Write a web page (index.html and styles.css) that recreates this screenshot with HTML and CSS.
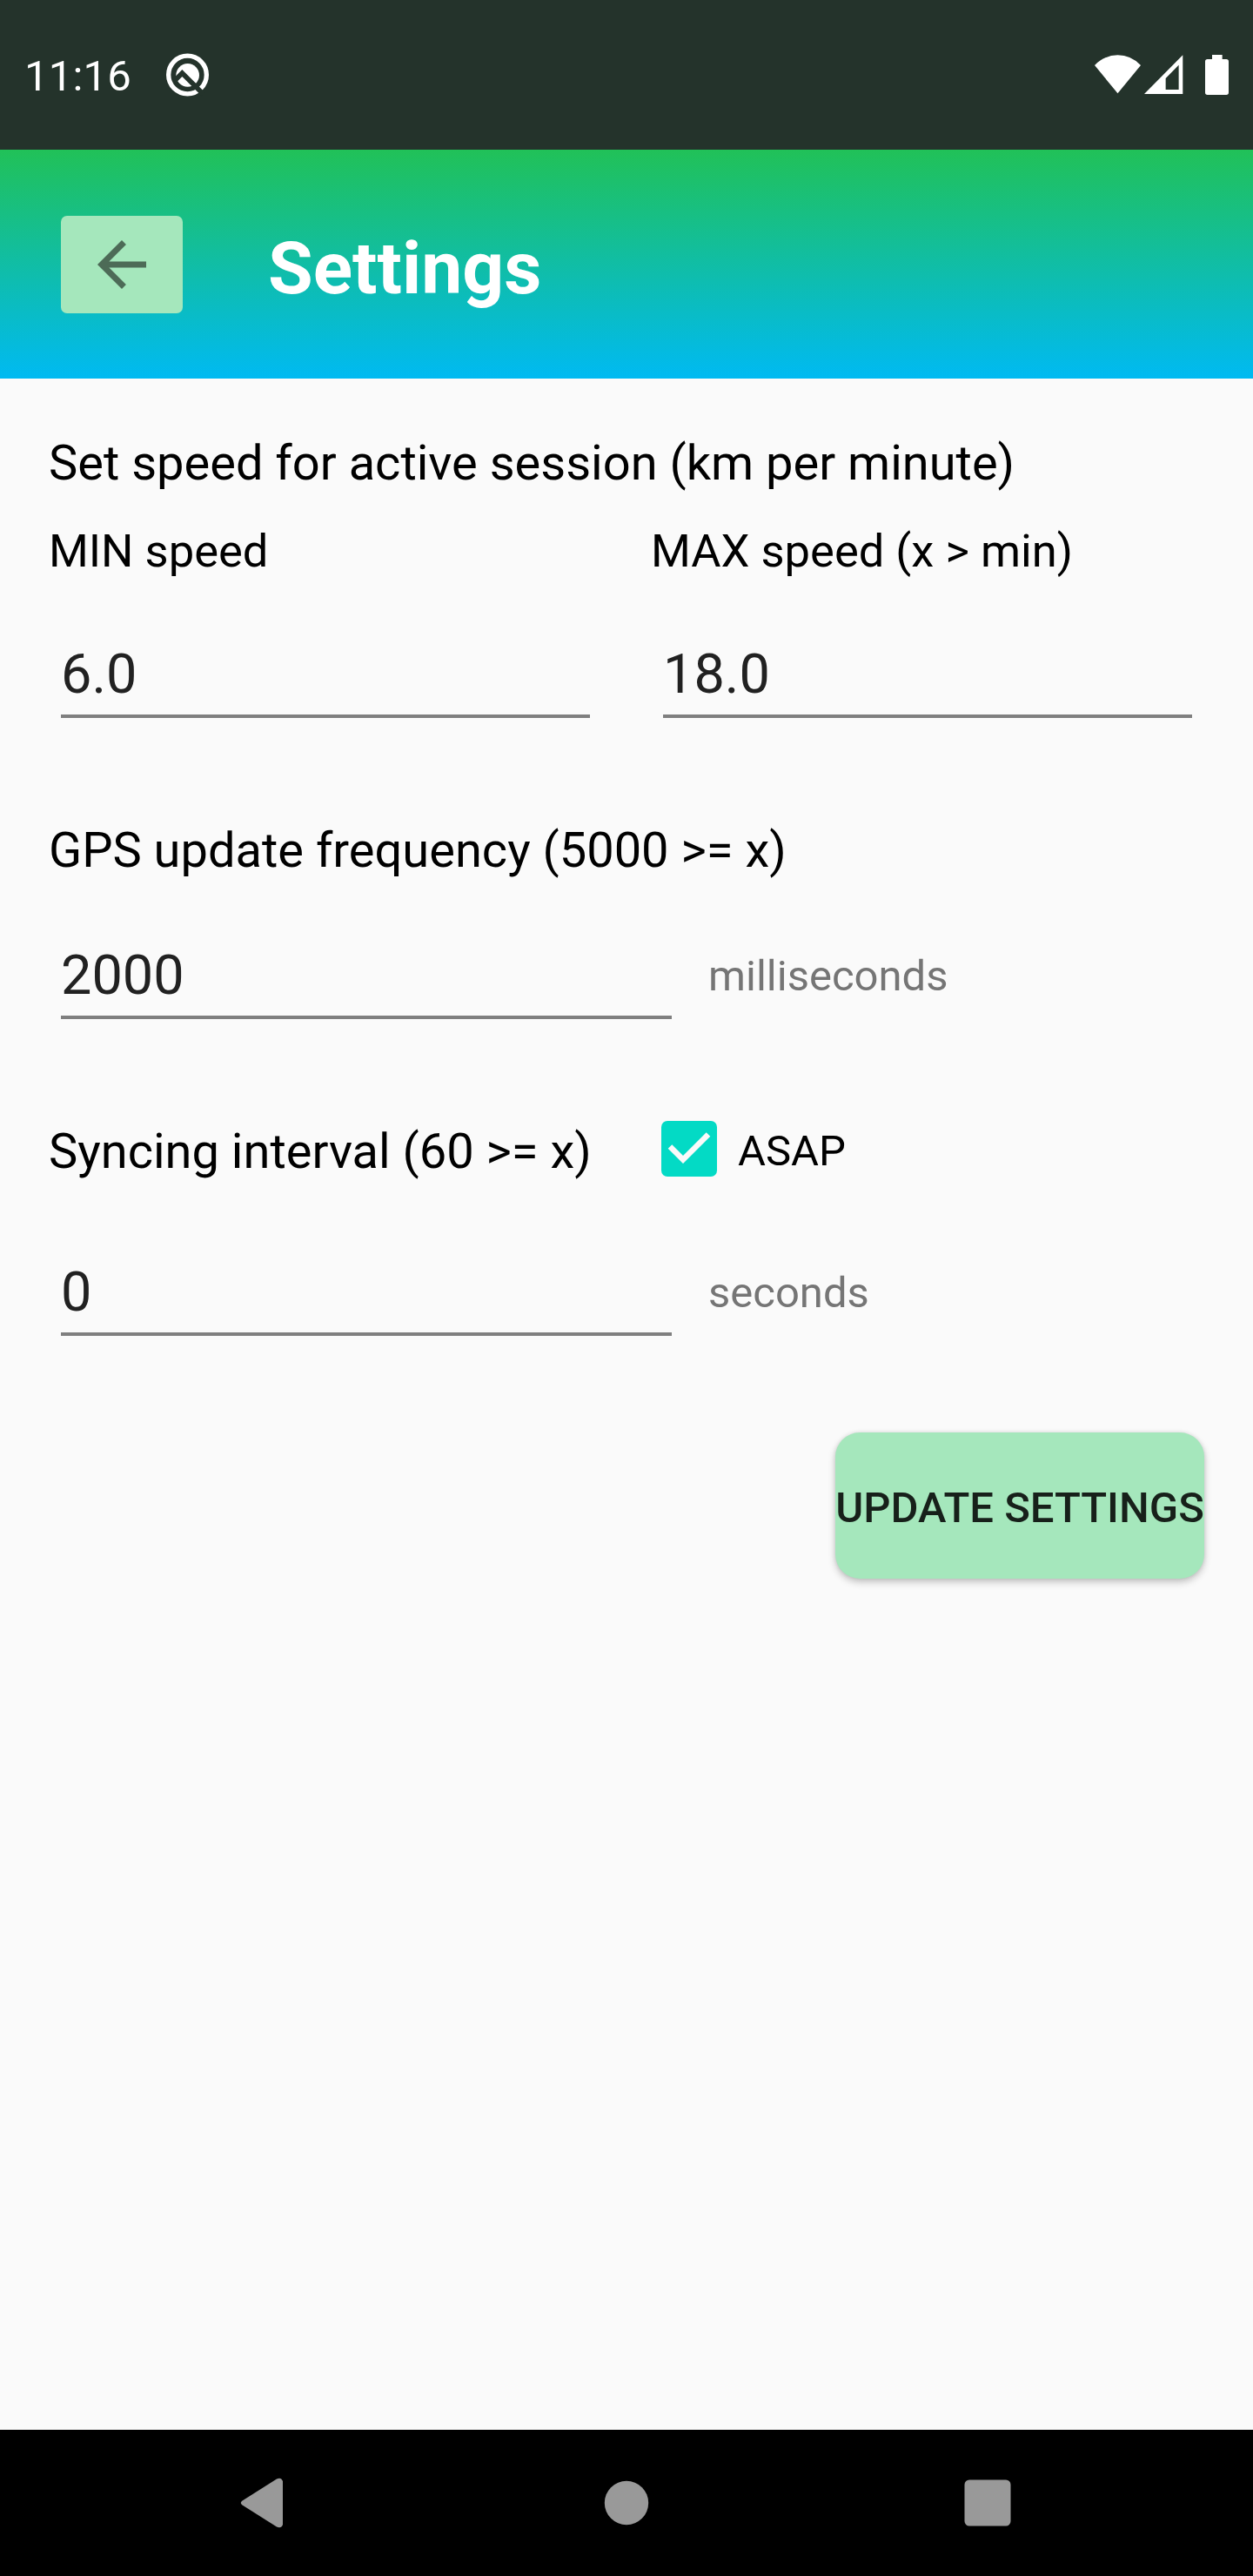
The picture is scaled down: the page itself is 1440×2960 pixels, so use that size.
FILE: index.html
```html
<!DOCTYPE html>
<html lang="en">
<head>
<meta charset="utf-8">
<title>Settings</title>
<link rel="stylesheet" href="styles.css">
</head>
<body>
<div class="screen">
  <div class="status-bar">
    <span class="clock">11:16</span>
    <svg class="icon-system" viewBox="0 0 147 150">
      <circle cx="73.5" cy="75" r="65.5" fill="none" stroke="#fff" stroke-width="16"/>
      <circle cx="74" cy="76" r="40" fill="#fff"/>
      <path d="M26 98L55 69L128 142" fill="none" stroke="#24332b" stroke-width="17"/>
    </svg>
    <div class="status-icons">
      <svg class="icon-wifi" viewBox="0 0 159 138"><path d="M0 36Q34 1 79.500 1T159 36L79.500 133Z" fill="#fff"/></svg>
      <svg class="icon-signal" viewBox="0 0 133 138"><path fill-rule="evenodd" d="M0 135L133 1V135ZM74 81V120H119V35Z" fill="#fff"/></svg>
      <svg class="icon-battery" viewBox="0 0 81 138"><path d="M24 0H59V15H73Q81 15 81 23V130Q81 138 73 138H8Q0 138 0 130V23Q0 15 8 15H24Z" fill="#fff"/></svg>
    </div>
  </div>

  <header class="app-bar">
    <div class="back-button" role="button" aria-label="Back">
      <svg class="icon-back" viewBox="0 0 24 24"><path d="M20 11H7.830l5.590-5.590L12 4l-8 8 8 8 1.410-1.410L7.830 13H20v-2z"/></svg>
    </div>
    <h1 class="title">Settings</h1>
  </header>

  <main class="content">
    <p class="label">Set speed for active session (km per minute)</p>
    <div class="columns speed">
      <div>
        <p class="sub-label">MIN speed</p>
        <div class="field">6.0</div>
      </div>
      <div>
        <p class="sub-label">MAX speed (x &gt; min)</p>
        <div class="field">18.0</div>
      </div>
    </div>

    <section class="group">
      <p class="label">GPS update frequency (5000 &gt;= x)</p>
      <div class="field-row">
        <div class="field field-wide">2000</div>
        <span class="unit">milliseconds</span>
      </div>
    </section>

    <section class="group group-sync">
      <div class="columns">
        <p class="label">Syncing interval (60 &gt;= x)</p>
        <div class="check">
          <svg class="checkbox" viewBox="0 0 64 64"><rect width="64" height="64" rx="7" fill="#03dac5"/><path d="M10 29.500L25 44.500L54 15.500" fill="none" stroke="#fafafa" stroke-width="6.500"/></svg>
          <span class="check-label">ASAP</span>
        </div>
      </div>
      <div class="field-row">
        <div class="field field-wide">0</div>
        <span class="unit">seconds</span>
      </div>
    </section>

    <div class="update-button" role="button">UPDATE SETTINGS</div>
  </main>

  <nav class="nav-bar">
    <svg class="nav-icon" viewBox="0 0 64 64"><path d="M5.500 29.500Q2 32 5.500 34.500L45 59.500Q50 62 52 57V7Q50 2 45 4.500Z"/></svg>
    <svg class="nav-icon" viewBox="0 0 64 64"><circle cx="32" cy="32" r="25.200"/></svg>
    <svg class="nav-icon" viewBox="0 0 64 64"><rect x="5.500" y="5.500" width="53" height="53" rx="5.500"/></svg>
  </nav>
</div>
</body>
</html>
```

FILE: styles.css
```css
* { box-sizing: border-box; }

body {
  margin: 0;
  font-family: Roboto, "Liberation Sans", sans-serif;
  background: #fafafa;
  color: #000;
}

p, h1 { margin: 0; }
svg { display: block; flex: none; }

.screen {
  width: 1440px;
  height: 2960px;
  display: flex;
  flex-direction: column;
}

.status-bar {
  height: 172px;
  padding: 0 28px;
  display: flex;
  align-items: center;
  background: #24332b;
  color: #fff;
}
.clock { width: 163px; padding-top: 4px; font-size: 49px; line-height: 60px; letter-spacing: .2px; }
.icon-system { width: 49px; height: 50px; }
.status-icons { display: flex; margin-left: auto; }
.icon-wifi { width: 53px; height: 46px; }
.icon-signal { width: 44.3px; height: 46px; margin-left: 4.4px; }
.icon-battery { width: 27px; height: 46px; margin-left: 25.3px; }

.app-bar {
  height: 263px;
  padding: 0 70px;
  display: flex;
  align-items: center;
  background: linear-gradient(#21c158, #00baf2);
}
.back-button {
  width: 140px;
  height: 112px;
  border-radius: 7px;
  background: #a5e7bc;
  display: flex;
  align-items: center;
  justify-content: center;
}
.icon-back { width: 84px; height: 84px; fill: #4d6b57; }
.title {
  margin-left: 98px;
  padding-top: 11px;
  color: #fff;
  font-size: 84px;
  line-height: 100px;
  font-weight: 700;
}

.content {
  flex: 1;
  padding: 65px 56px 0;
  display: flex;
  flex-direction: column;
}
.label { font-size: 56px; line-height: 64px; white-space: nowrap; }
.sub-label { font-size: 52.500px; line-height: 62px; white-space: nowrap; }
.columns { display: grid; grid-template-columns: 636px 636px; column-gap: 56px; }
.speed { margin-top: 38px; }

.field {
  margin: 0 14px;
  height: 87px;
  font-size: 63px;
  line-height: 74px;
  color: #212121;
  border-bottom: 4px solid #7f7f7f;
}
.speed .field { margin-top: 74px; }
.group { margin-top: 120px; }
.field-row { display: flex; margin-top: 75px; }
.group-sync .field-row { margin-top: 93px; }
.field-wide { width: 702px; }
.unit { margin-left: 28px; font-size: 49px; line-height: 76px; color: #757575; }

.check { display: flex; align-items: center; padding-left: 12px; }
.checkbox { width: 64px; height: 64px; margin-top: -6px; }
.check-label { margin-left: 24px; font-size: 49px; line-height: 62px; }

.update-button {
  align-self: flex-end;
  width: 424px;
  height: 168px;
  margin-top: 111px;
  padding-top: 5px;
  border-radius: 28px;
  background: #a5e7bc;
  box-shadow: 0 4px 8px rgba(0, 0, 0, .22), 0 0 4px rgba(0, 0, 0, .1);
  color: #17201a;
  font-size: 49px;
  font-weight: 500;
  line-height: 164px;
  text-align: center;
  white-space: nowrap;
}

.nav-bar {
  height: 168px;
  padding: 0 273px;
  display: flex;
  align-items: center;
  justify-content: space-between;
  background: #000;
}
.nav-icon { width: 64px; height: 64px; fill: #999; }
```
